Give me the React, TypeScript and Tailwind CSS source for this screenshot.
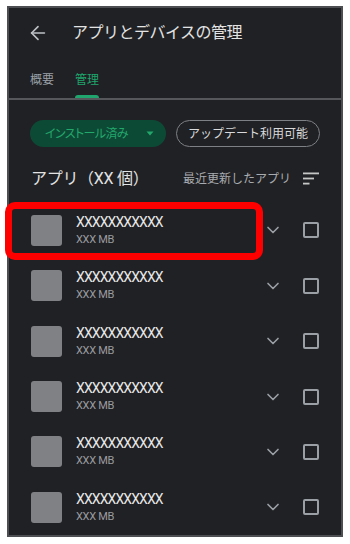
import React from 'react';
import { ArrowLeft, ChevronDown } from 'lucide-react';

const font = "font-['Roboto','Noto_Sans_CJK_JP',sans-serif]";

const apps = Array.from({ length: 6 }, () => ({ name: 'XXXXXXXXXXX', size: 'XXX MB' }));

const SortIcon = () => (
  <svg width="16" height="13" viewBox="0 0 16 13" className="text-[#c4c7c5]">
    <rect x="0" y="0.5" width="16" height="1.8" fill="currentColor" />
    <rect x="0" y="5.6" width="11" height="1.8" fill="currentColor" />
    <rect x="0" y="10.7" width="6.5" height="1.8" fill="currentColor" />
  </svg>
);

export default function App() {
  return (
    <div className={`relative w-[350px] h-[544px] bg-white pt-[6px] pl-[7px] ${font}`}>
      <div className="w-[336px] h-[531px] border-2 border-[#4d4e51] bg-[#202124] flex flex-col overflow-hidden">

        {/* Top bar */}
        <div className="h-[50px] flex items-center">
          <ArrowLeft className="ml-[18px] w-[22px] h-[22px] text-[#bdc1c6]" strokeWidth={1.8} />
          <h1 className="ml-[23px] text-[16px] text-[#e3e3e3] tracking-[-0.5px]">アプリとデバイスの管理</h1>
        </div>

        {/* Tabs */}
        <div className="h-[41px] flex items-stretch px-[21px] gap-[21px] text-[12px]">
          <div className="flex items-center pt-[5px] text-[#9aa0a6]">概要</div>
          <div className="relative flex items-center pt-[5px] text-[#1fa56d]">
            管理
            <div className="absolute bottom-0 left-0 right-0 h-[3px] rounded-t-[3px] bg-[#1fa56d]" />
          </div>
        </div>
        <div className="h-[2px] bg-[#55575b]" />

        {/* Filter chips */}
        <div className="mt-[20px] flex items-center gap-[10px] px-[21px]">
          <div className="h-[27px] w-[140px] rounded-full bg-[#0d4a36] flex items-center pl-[15px] pr-[12px] text-[12px] text-[#23a86c] tracking-[-0.6px] [font-feature-settings:'palt']">
            <span className="flex-1">インストール済み</span>
            <svg width="8" height="5" viewBox="0 0 8 5"><path d="M0.5 0.5h7L4 4.5z" fill="#23a86c" /></svg>
          </div>
          <div className="h-[27px] w-[149px] rounded-full border border-[#7d8085] flex items-center justify-center text-[12px] text-[#d8d9db]">
            アップデート利用可能
          </div>
        </div>

        {/* Section header */}
        <div className="mt-[12px] h-[40px] flex items-center pl-[22px] pr-[22px]">
          <span className="text-[16px] text-[#e3e3e3] flex-1 tracking-[-0.3px]">アプリ（XX 個）</span>
          <span className="text-[12px] text-[#a8abaf] mr-[12px]">最近更新したアプリ</span>
          <SortIcon />
        </div>

        {/* App list */}
        <div className="mt-[4px] flex flex-col">
          {apps.map((app, i) => (
            <div key={i} className="h-[55.4px] flex items-center pl-[22px] pr-[22px]">
              <div className="w-[31px] h-[31px] rounded-[3px] bg-[#808184]" />
              <div className="ml-[14px] flex-1 flex flex-col">
                <span className="text-[14px] leading-[17px] text-[#e8e8e8] tracking-[-0.9px]">{app.name}</span>
                <span className="text-[11px] leading-[15px] text-[#9a9ca0] tracking-[-0.3px] mt-[1px]">{app.size}</span>
              </div>
              <ChevronDown className="w-[20px] h-[20px] text-[#9aa0a6]" strokeWidth={2} />
              <div className="ml-[20px] w-[16px] h-[16px] rounded-[2px] border-2 border-[#9aa0a6]" />
            </div>
          ))}
        </div>
      </div>

      {/* Highlight frame */}
      <div className="absolute left-[5px] top-[202px] w-[258px] h-[58px] rounded-[10px] border-[7px] border-[#ff0000]" />
    </div>
  );
}
